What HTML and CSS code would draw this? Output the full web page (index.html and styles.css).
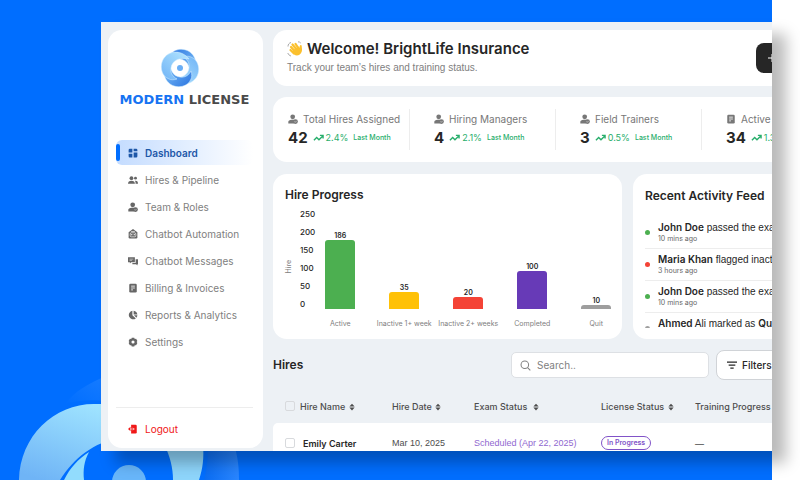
FILE: index.html
```html
<!DOCTYPE html>
<html lang="en-us">
	<head>
		<meta charset="UTF-8">
		<meta name="viewport" content="width=device-width, initial-scale=1.0">
		<title>Modern License</title>
		<link rel="stylesheet" href="styles.css">
	</head>

	<body>
		<!-- Shared icons -->
		<svg class="sprite" aria-hidden="true">
			<symbol id="icoUser" viewBox="0 0 16 16">
				<circle cx="7.5" cy="4.5" r="3.8"/>
				<path d="M0.500 15v-2.500c0-2 2-3.500 5-3.500h5v6z"/>
				<circle cx="12" cy="12" r="3.800"/>
				<path d="M10.300 12l1.300 1.300 2.200-2.300" fill="none" stroke="#fff" stroke-width="0.800"/>
			</symbol>
			<symbol id="icoDoc" viewBox="0 0 16 16">
				<rect x="2" y="1" width="12" height="14" rx="2"/>
				<path d="M5 5h6M5 8h6M5 11h3" stroke="#fff" stroke-width="1.300"/>
			</symbol>
			<symbol id="icoTrend" viewBox="0 0 12 8">
				<path d="M1 6.500l3-3 2.500 2.500L11 1.500M7.500 1.200H11v3.300" fill="none" stroke="currentColor" stroke-width="1.500"/>
			</symbol>
			<symbol id="icoSort" viewBox="0 0 8 10">
				<path d="M4 .5L7.500 4.300h-7zM4 9.500L.5 5.700h7z"/>
			</symbol>
		</svg>

		<section class="hero">
			<!-- Background emblem -->
			<svg class="emblem" viewBox="0 0 270 120" aria-hidden="true">
				<defs>
					<linearGradient id="ringFill" x1="0.700" y1="0" x2="0.200" y2="1">
						<stop offset="0" stop-color="#9fe3ff"/>
						<stop offset="1" stop-color="#6fb4f6"/>
					</linearGradient>
					<linearGradient id="fadeFill" x1="0" y1="1" x2="1" y2="0">
						<stop offset="0" stop-color="#3f94ff" stop-opacity="0"/>
						<stop offset="1" stop-color="#3f94ff" stop-opacity="0.400"/>
					</linearGradient>
					<linearGradient id="sideFill" x1="0" y1="0" x2="1" y2="0">
						<stop offset="0" stop-color="#0a6cf2"/>
						<stop offset="1" stop-color="#2a86ff"/>
					</linearGradient>
				</defs>
				<path d="M65 44C74 32 87 24 110 14V42C94 39 79 40 65 44z" fill="url(#fadeFill)"/>
				<path d="M19 120C20 76 54 44 94 44H120V78C94 82 74 98 60 120z" fill="url(#ringFill)"/>
				<path d="M89 92C84 101 83 110 84 120H64C70 108 78 99 89 92z" fill="#92dcfd"/>
				<path d="M164 84C170 96 173 108 173 120H199C203 108 204 98 203 84z" fill="#8ed5fb"/>
				<path d="M208 84C208 98 207 108 204 120H239C239 107 238 98 234 84z" fill="url(#sideFill)"/>
				<circle cx="129" cy="122" r="17" fill="#68b6fa"/>
			</svg>

			<div class="app">
				<aside class="sidebar">
					<div class="brand">
						<svg class="brandMark" viewBox="0 0 40 40" aria-hidden="true">
							<defs>
								<linearGradient id="petalDark" x1="0" y1="0" x2="1" y2="1">
									<stop offset="0" stop-color="#2a73e0"/>
									<stop offset="1" stop-color="#8accfb"/>
								</linearGradient>
								<linearGradient id="petalLight" x1="0" y1="0" x2="1" y2="1">
									<stop offset="0" stop-color="#6fb3f6"/>
									<stop offset="1" stop-color="#b5e7ff"/>
								</linearGradient>
							</defs>
							<g stroke="#d9f1ff" stroke-width="0.500">
								<path id="petal" d="M9 9C12 1 23-1 30 4C38 10 38 22 29 29C31 20 28 12 20 11C15 10 11 13 9 17C8 14 8 11 9 9z" fill="url(#petalDark)"/>
								<path d="M9 9C12 1 23-1 30 4C38 10 38 22 29 29C31 20 28 12 20 11C15 10 11 13 9 17C8 14 8 11 9 9z" fill="url(#petalLight)" transform="rotate(90 20 20)"/>
								<use href="#petal" transform="rotate(180 20 20)"/>
								<path d="M9 9C12 1 23-1 30 4C38 10 38 22 29 29C31 20 28 12 20 11C15 10 11 13 9 17C8 14 8 11 9 9z" fill="url(#petalLight)" transform="rotate(270 20 20)"/>
							</g>
							<circle cx="20" cy="20" r="7" fill="#fff"/>
							<circle cx="20" cy="20" r="3" fill="#6aaef5"/>
						</svg>
						<div class="brandName"><span>MODERN</span> LICENSE</div>
					</div>

					<nav class="menu">
						<a class="active" href="#">
							<svg viewBox="0 0 16 16"><path d="M1 3a2 2 0 0 1 2-2h4v6H1zM9 1h4a2 2 0 0 1 2 2v2H9zM9 7h6v6a2 2 0 0 1-2 2H9zM1 9h6v6H3a2 2 0 0 1-2-2z"/></svg>
							Dashboard
						</a>
						<a href="#">
							<svg viewBox="0 0 16 16"><circle cx="5.500" cy="5" r="3"/><path d="M0 14c0-3 2-5 5.500-5s5.500 2 5.500 5z"/><circle cx="12" cy="5" r="2.300"/><path d="M12 14h4c0-3-1-5-4-5h-1c1 1.500 1.500 3 1 5z"/></svg>
							Hires &amp; Pipeline
						</a>
						<a href="#">
							<svg><use href="#icoUser"/></svg>
							Team &amp; Roles
						</a>
						<a href="#">
							<svg viewBox="0 0 16 16"><path d="M8 0l7 5v8a2 2 0 0 1-2 2H3a2 2 0 0 1-2-2V5z"/><rect x="3.500" y="6" width="9" height="6.500" rx="2" fill="none" stroke="#fff"/><circle cx="6" cy="9" r="1" fill="#fff"/><circle cx="10" cy="9" r="1" fill="#fff"/><path d="M5 4h6" stroke="#fff"/></svg>
							Chatbot Automation
						</a>
						<a href="#">
							<svg viewBox="0 0 16 16"><path d="M0 2h11v8H5l-2 2v-2H0z"/><path d="M12.200 5H16v8h-1v2l-2-2H7v-1.800h5.200z"/><path d="M2.500 5h6M2.500 7h4" stroke="#fff" stroke-width="0.800"/></svg>
							Chatbot Messages
						</a>
						<a href="#">
							<svg><use href="#icoDoc"/></svg>
							Billing &amp; Invoices
						</a>
						<a href="#">
							<svg viewBox="0 0 16 16"><path d="M7 1v7.500l5.500 5A7 7 0 1 1 7 1z"/><path d="M9 1a7 7 0 0 1 6 6H9zM9.500 8.500H15a6 6 0 0 1-1.500 3.800z"/></svg>
							Reports &amp; Analytics
						</a>
						<a href="#">
							<svg viewBox="0 0 16 16"><path fill-rule="evenodd" d="M6 1h4l.8 2 2.200-.2 2 3.500L13.800 8 15 9.700l-2 3.500-2.200-.2-.8 2H6l-.8-2-2.200.2-2-3.500L2.200 8 1 6.300l2-3.500 2.200.2zM8 5.500a2.500 2.500 0 1 0 0 5 2.500 2.500 0 0 0 0-5z"/></svg>
							Settings
						</a>
					</nav>

					<div class="logout">
						<a href="#">
							<svg viewBox="0 0 16 16"><path d="M5 1h7a2 2 0 0 1 2 2v10a2 2 0 0 1-2 2H5z"/><path d="M0 8l4-3.500v7z"/><path d="M4 8h6M8 6l2 2-2 2" fill="none" stroke="#fff"/></svg>
							Logout
						</a>
					</div>
				</aside>

				<main class="content">
					<header class="card welcome">
						<div>
							<h1>
								<svg viewBox="0 0 16 16" aria-hidden="true">
									<g fill="none" stroke="#fbc02d" stroke-linecap="round" stroke-width="2.200">
										<path d="M4 6l4.500 5M5.500 3.500L10 9M8.500 2.800L12 8"/>
										<path d="M3.500 9l3.500 3.500"/>
									</g>
									<path d="M5 10l6.500-4.500 1.200 1.500c-.3-1.500 0-3 1.200-3 1 0 .8 1.500 1.100 4C15.300 11.500 13 14.500 10 14.500 7.800 14.500 6 12.500 5 10z" fill="#fbc02d"/>
									<path d="M1 5.500C1 3.500 2 2 4 1.500M.8 12c.5 1.500 1.700 2.600 3.200 3M11 .8c1.300 0 2 .4 2.700 1.200" fill="none" stroke="#a9a9a9" stroke-width="1"/>
								</svg>
								Welcome! BrightLife Insurance
							</h1>
							<p>Track your team’s hires and training status.</p>
						</div>
						<button class="addButton" type="button" aria-label="Add hire">
							<svg viewBox="0 0 8 8" aria-hidden="true"><path d="M4 0v8M0 4h8" stroke="#fff"/></svg>
						</button>
					</header>

					<section class="card stats">
						<div class="stat">
							<h3><svg><use href="#icoUser"/></svg>Total Hires Assigned</h3>
							<p><b>42</b><svg><use href="#icoTrend"/></svg><span>2.4%</span><small>Last Month</small></p>
						</div>
						<div class="stat">
							<h3><svg><use href="#icoUser"/></svg>Hiring Managers</h3>
							<p><b>4</b><svg><use href="#icoTrend"/></svg><span>2.1%</span><small>Last Month</small></p>
						</div>
						<div class="stat">
							<h3><svg><use href="#icoUser"/></svg>Field Trainers</h3>
							<p><b>3</b><svg><use href="#icoTrend"/></svg><span>0.5%</span><small>Last Month</small></p>
						</div>
						<div class="stat">
							<h3><svg><use href="#icoDoc"/></svg>Active</h3>
							<p><b>34</b><svg><use href="#icoTrend"/></svg><span>1.3%</span></p>
						</div>
					</section>

					<div class="panels">
						<section class="card progress">
							<h2>Hire Progress</h2>
							<div class="chart">
								<div class="axisTitle">Hire</div>
								<div class="axis">
									<span>250</span><span>200</span><span>150</span><span>100</span><span>50</span><span>0</span>
								</div>
								<div class="bars">
									<div class="barItem"><div class="plot"><b>186</b><i class="bar green" style="height: 73%"></i></div><span>Active</span></div>
									<div class="barItem"><div class="plot"><b>35</b><i class="bar yellow" style="height: 18%"></i></div><span>Inactive 1+ week</span></div>
									<div class="barItem"><div class="plot"><b>20</b><i class="bar red" style="height: 13%"></i></div><span>Inactive 2+ weeks</span></div>
									<div class="barItem"><div class="plot"><b>100</b><i class="bar purple" style="height: 40%"></i></div><span>Completed</span></div>
									<div class="barItem"><div class="plot"><b>10</b><i class="bar gray" style="height: 4%"></i></div><span>Quit</span></div>
								</div>
							</div>
						</section>

						<section class="card feed">
							<h2>Recent Activity Feed</h2>
							<ul>
								<li class="good"><p><b>John Doe</b> passed the exam</p><small>10 mins ago</small></li>
								<li class="bad"><p><b>Maria Khan</b> flagged inactive</p><small>3 hours ago</small></li>
								<li class="good"><p><b>John Doe</b> passed the exam</p><small>10 mins ago</small></li>
								<li><p><b>Ahmed</b> Ali marked as <b>Quit</b></p></li>
							</ul>
						</section>
					</div>

					<section class="hires">
						<div class="toolbar">
							<h2>Hires</h2>
							<label class="search">
								<svg viewBox="0 0 16 16" aria-hidden="true"><circle cx="7" cy="7" r="5.500"/><path d="M11 11l4 4"/></svg>
								<input type="text" placeholder="Search.." aria-label="Search hires">
							</label>
							<button class="filterButton" type="button">
								<svg viewBox="0 0 12 10" aria-hidden="true"><path d="M0 1h12M2 4.500h8M4 8h4" stroke="currentColor" stroke-width="1.500"/></svg>
								Filters
							</button>
						</div>
						<table>
							<thead>
								<tr>
									<th class="colCheck"><input type="checkbox" aria-label="Select all"></th>
									<th class="colName">Hire Name <svg><use href="#icoSort"/></svg></th>
									<th class="colDate">Hire Date <svg><use href="#icoSort"/></svg></th>
									<th class="colExam">Exam Status &nbsp;<svg><use href="#icoSort"/></svg></th>
									<th class="colLicense">License Status <svg><use href="#icoSort"/></svg></th>
									<th>Training Progress<svg><use href="#icoSort"/></svg></th>
								</tr>
							</thead>
							<tbody>
								<tr>
									<td><input type="checkbox" aria-label="Select Emily Carter"></td>
									<td class="name">Emily Carter</td>
									<td class="date">Mar 10, 2025</td>
									<td class="scheduled">Scheduled (Apr 22, 2025)</td>
									<td><span class="badge">In Progress</span></td>
									<td>—</td>
								</tr>
							</tbody>
						</table>
					</section>
				</main>
			</div>
		</section>
	</body>
</html>
```
FILE: styles.css
```css
*
{
	box-sizing: border-box;
}

body
{
	margin: 0;
	background: #FFFFFF;
	color: #262626;
	font-family: Inter, "Liberation Sans", sans-serif;
	font-size: 10px;
	overflow: hidden;
}

h1, h2, h3, p, ul
{
	margin: 0;
	padding: 0;
}

a
{
	color: inherit;
	text-decoration: none;
}

svg
{
	flex: none;
	fill: currentColor;
}

button, input
{
	font: inherit;
	color: inherit;
}

.sprite
{
	display: none;
}

.hero
{
	position: relative;
	height: 100vh;
	margin-right: 28px;
	padding: 22px 0 29px 101px;
	background: #006EFF;
}

.emblem
{
	position: absolute;
	left: 0;
	bottom: 0;
	width: 270px;
	height: 120px;
}

.app
{
	position: relative;
	display: flex;
	gap: 10px;
	height: 100%;
	padding: 8px 0 3px 7px;
	background: #EDF1F5;
	box-shadow: 14px 12px 14px rgba(0, 0, 0, 0.27);
	overflow: hidden;
}

.card
{
	background: #FFFFFF;
	border-radius: 14px;
}

/* Sidebar */
.sidebar
{
	display: flex;
	flex: none;
	flex-direction: column;
	width: 155px;
	padding: 18px 10px 0 8px;
	background: #FFFFFF;
	border-radius: 14px;
}

.brand
{
	display: flex;
	flex-direction: column;
	align-items: center;
	margin-bottom: 34px;
}

.brandMark
{
	width: 40px;
	height: 40px;
	margin-right: 10px;
}

.brandName
{
	margin-top: 6px;
	color: #4A4A4A;
	font-family: "DejaVu Sans", sans-serif;
	font-size: 13px;
	font-weight: bold;
	line-height: 12px;
	white-space: nowrap;
}

.brandName span
{
	color: #1673F2;
}

.menu
{
	display: flex;
	flex-direction: column;
	gap: 2px;
}

.menu a, .logout a
{
	display: flex;
	align-items: center;
	gap: 7px;
	height: 25px;
	padding-left: 12px;
	color: #808080;
	white-space: nowrap;
}

.menu svg, .logout svg
{
	width: 10px;
	height: 10px;
}

.menu svg
{
	color: #666666;
}

.menu .active
{
	position: relative;
	border-radius: 6px;
	background: linear-gradient(90deg, #C4DCFF, #FFFFFF);
	color: #1D57A8;
	font-weight: 600;
}

.menu .active::before
{
	content: "";
	position: absolute;
	top: 4px;
	bottom: 4px;
	left: 0;
	width: 4px;
	border-radius: 2px;
	background: #006EFF;
}

.menu .active svg
{
	color: #1D57A8;
}

.logout
{
	margin-top: auto;
	padding: 8px 0 7px;
	border-top: 1px solid #EDEDED;
}

.logout a
{
	color: #F01818;
}

/* Main column */
.content
{
	flex: 1 0 607px;
}

.welcome
{
	display: flex;
	align-items: center;
	justify-content: space-between;
	height: 56px;
	padding: 0 14px;
}

.welcome h1
{
	display: flex;
	align-items: center;
	gap: 4px;
	font-size: 15px;
	font-weight: 600;
	line-height: 20px;
}

.welcome h1 svg
{
	width: 16px;
	height: 16px;
}

.welcome p
{
	color: #808080;
	font-family: "Liberation Sans", sans-serif;
	line-height: 18px;
}

.addButton
{
	width: 110px;
	height: 30px;
	padding: 0 12px;
	border: 0;
	border-radius: 8px;
	background: #262626;
	text-align: left;
}

.addButton svg
{
	width: 8px;
	height: 8px;
}

.stats
{
	display: grid;
	grid-template-columns: repeat(4, 146px);
	margin-top: 11px;
	padding: 12px 0;
}

.stat
{
	height: 41px;
	padding-left: 15px;
	white-space: nowrap;
}

.stat + .stat
{
	position: relative;
}

.stat + .stat::before
{
	content: "";
	position: absolute;
	top: 0;
	bottom: 0;
	left: -10px;
	border-left: 1px solid #EDEDED;
}

.stat h3
{
	display: flex;
	align-items: center;
	gap: 5px;
	color: #777777;
	font-size: 10px;
	font-weight: 400;
	line-height: 20px;
}

.stat h3 svg
{
	width: 10px;
	height: 10px;
}

.stat p
{
	display: flex;
	align-items: center;
	line-height: 18px;
	color: #27AE6B;
}

.stat b
{
	margin-right: 5px;
	color: #262626;
	font-size: 15px;
}

.stat p svg
{
	width: 11px;
	height: 8px;
	margin-right: 2px;
}

.stat span
{
	font-size: 9px;
}

.stat small
{
	margin-left: 5px;
	font-size: 7px;
	font-weight: 500;
}

.panels
{
	display: grid;
	grid-template-columns: 349px 1fr;
	grid-template-rows: 165px;
	gap: 11px;
	margin-top: 12px;
}

h2
{
	font-size: 12px;
	font-weight: 600;
	line-height: 16px;
}

/* Chart */
.progress
{
	padding: 13px 10px 0 12px;
}

.chart
{
	display: flex;
	margin-top: 2px;
}

.axisTitle
{
	align-self: center;
	width: 8px;
	color: #808080;
	font-size: 7px;
	line-height: 8px;
	writing-mode: vertical-rl;
	transform: rotate(180deg);
}

.axis
{
	display: flex;
	flex-direction: column;
	width: 16px;
	margin-left: 7px;
	font-size: 8px;
	font-weight: 500;
	line-height: 18px;
}

.bars
{
	display: grid;
	grid-template-columns: repeat(5, 64px);
	margin-left: -7px;
}

.barItem
{
	display: flex;
	flex-direction: column;
	align-items: center;
	color: #808080;
	font-size: 7px;
	white-space: nowrap;
}

.plot
{
	display: flex;
	flex-direction: column;
	align-items: center;
	justify-content: flex-end;
	height: 104px;
	padding-top: 9px;
}

.plot b
{
	color: #262626;
	font-weight: 600;
	line-height: 9px;
}

.bar
{
	flex: none;
	width: 30px;
	border-radius: 3px 3px 0 0;
}

.green
{
	background: #4CAF50;
}

.yellow
{
	background: #FFC107;
}

.red
{
	background: #F44336;
}

.purple
{
	background: #673AB7;
}

.gray
{
	background: #9E9E9E;
}

.barItem > span
{
	margin-top: 10px;
	line-height: 10px;
}

/* Activity feed */
.feed
{
	display: flex;
	flex-direction: column;
	padding: 14px 12px 11px;
}

.feed ul
{
	margin-top: 13px;
	overflow: hidden;
	list-style: none;
}

.feed li
{
	position: relative;
	height: 32px;
	padding: 4px 0 0 13px;
	border-bottom: 1px solid #EDEDED;
	white-space: nowrap;
}

.feed li::before
{
	content: "";
	position: absolute;
	top: 13px;
	left: 0;
	width: 5px;
	height: 5px;
	border-radius: 50%;
	background: #9E9E9E;
}

.feed .good::before
{
	background: #4CAF50;
}

.feed .bad::before
{
	background: #F44336;
}

.feed p
{
	font-family: "Liberation Sans", sans-serif;
	line-height: 13px;
}

.feed b
{
	font-family: Inter, sans-serif;
	font-weight: 600;
}

.feed small
{
	display: block;
	color: #666666;
	font-size: 7px;
	line-height: 9px;
}

/* Hires table */
.toolbar
{
	display: flex;
	align-items: center;
	height: 30px;
	margin-top: 11px;
}

.toolbar h2
{
	width: 238px;
}

.search
{
	display: flex;
	align-items: center;
	gap: 6px;
	width: 198px;
	height: 26px;
	margin-right: 7px;
	padding: 0 8px;
	border: 1px solid #DDE0E4;
	border-radius: 5px;
	background: #FFFFFF;
	color: #808080;
}

.search svg
{
	width: 11px;
	height: 11px;
	fill: none;
	stroke: #808080;
	stroke-width: 1.5;
}

.search input
{
	width: 100%;
	padding: 0;
	border: 0;
	outline: 0;
	background: none;
}

.search input::placeholder
{
	color: #808080;
}

.filterButton
{
	display: flex;
	align-items: center;
	gap: 5px;
	height: 30px;
	padding: 0 10px;
	border: 1px solid #D0D3D7;
	border-radius: 8px;
	background: #FFFFFF;
	font-weight: 500;
}

.filterButton svg
{
	width: 10px;
	height: 9px;
}

table
{
	width: 100%;
	margin-top: 9px;
	border-collapse: collapse;
	table-layout: fixed;
}

th, td
{
	padding: 0;
	text-align: left;
	white-space: nowrap;
}

th
{
	height: 34px;
	color: #4D4D4D;
	font-size: 9px;
	font-weight: 500;
}

th svg
{
	width: 6px;
	height: 8px;
	margin-left: 1px;
	vertical-align: -1px;
}

.colCheck
{
	width: 27px;
}

.colName
{
	width: 92px;
}

.colDate
{
	width: 82px;
}

.colExam
{
	width: 127px;
}

.colLicense
{
	width: 94px;
}

td
{
	height: 40px;
	background: #FFFFFF;
	color: #4D4D4D;
	font-size: 9px;
}

td:first-child
{
	border-radius: 5px 0 0 0;
}

.name
{
	padding-left: 3px;
	color: #262626;
	font-weight: 600;
}

.date, .scheduled
{
	font-family: "Liberation Sans", sans-serif;
}

.scheduled
{
	color: #9068D0;
}

.badge
{
	display: inline-block;
	padding: 0 5px;
	border: 1px solid #8153C8;
	border-radius: 7px;
	color: #8153C8;
	font-size: 7px;
	font-weight: 600;
	line-height: 12px;
}

input[type="checkbox"]
{
	display: block;
	width: 10px;
	height: 10px;
	margin: 0 0 0 12px;
	border: 1px solid #D8DADD;
	border-radius: 2px;
	appearance: none;
}
```
